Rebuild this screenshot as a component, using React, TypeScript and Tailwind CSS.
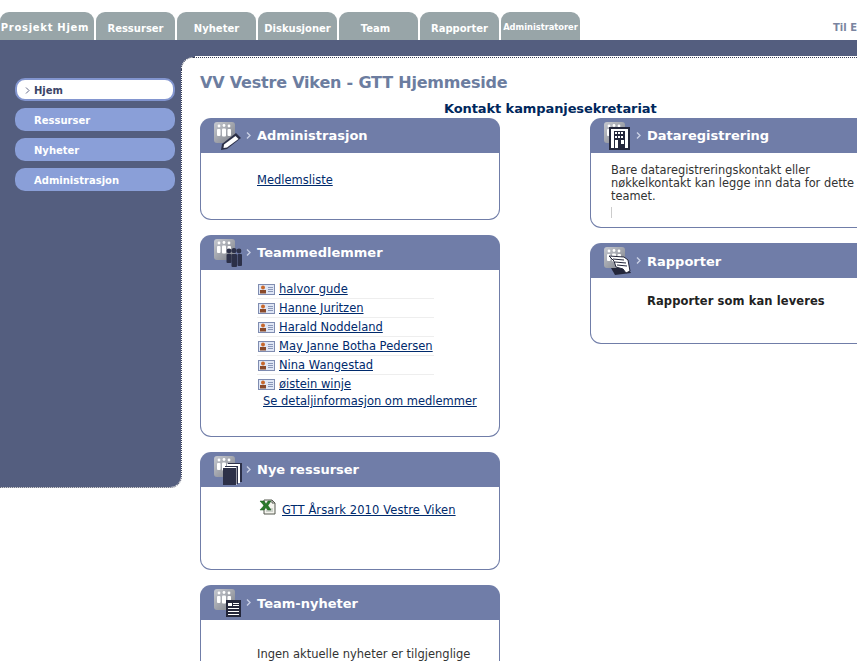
import React from "react";

const font = "font-['DejaVu_Sans','Liberation_Sans',sans-serif]";

function BaseIcon({ children }: { children?: React.ReactNode }) {
  return (
    <svg width="30" height="30" viewBox="0 0 30 30" className="shrink-0">
      <defs>
        <linearGradient id="tile" x1="0" y1="0" x2="1" y2="1">
          <stop offset="0" stopColor="#c6c9d0" />
          <stop offset="1" stopColor="#7d8088" />
        </linearGradient>
      </defs>
      <rect x="1" y="1" width="21" height="21" rx="3" fill="url(#tile)" />
      <g fill="#ffffff">
        <circle cx="6" cy="5" r="1.4" />
        <circle cx="11" cy="4.5" r="1.4" />
        <circle cx="16" cy="5" r="1.4" />
        <rect x="4" y="8" width="3.5" height="7" rx="1" />
        <rect x="9" y="7.5" width="4" height="8" rx="1" />
        <rect x="14.5" y="8" width="3.5" height="7" rx="1" />
      </g>
      {children}
    </svg>
  );
}

const Pencil = () => (
  <g>
    <path d="M23 12 L28 17 L14 28 L8 29 L9 23 Z" fill="#2c3048" />
    <path d="M22.5 15 L25.5 18 L14 26.5 L10.5 27 L11 23.5 Z" fill="#ffffff" />
  </g>
);

const People = () => (
  <g fill="#2c3048">
    <circle cx="16" cy="13" r="2.4" />
    <circle cx="21" cy="12.5" r="2.6" />
    <circle cx="26" cy="13" r="2.4" />
    <rect x="13.5" y="16" width="5" height="9" rx="1" />
    <rect x="18.5" y="16" width="5.5" height="13" rx="1" />
    <rect x="24.5" y="16" width="4.5" height="12" rx="1" />
  </g>
);

const Pages = () => (
  <g>
    <rect x="15" y="8" width="14" height="19" fill="#2c3048" />
    <rect x="14" y="9" width="13" height="19" fill="#ffffff" />
    <rect x="12" y="11" width="13" height="18" fill="#2c3048" />
    <rect x="11" y="12" width="12.5" height="18" fill="#ffffff" />
    <rect x="10" y="13" width="13" height="17" fill="#2c3048" />
  </g>
);

const News = () => (
  <g>
    <rect x="13" y="12" width="15" height="17" fill="#23263a" />
    <rect x="15" y="15" width="4" height="3" fill="#ffffff" />
    <g fill="#ffffff">
      <rect x="20" y="15" width="6" height="1" />
      <rect x="20" y="17" width="6" height="1" />
      <rect x="15" y="20" width="11" height="1" />
      <rect x="15" y="23" width="11" height="1" />
      <rect x="15" y="26" width="11" height="1" />
    </g>
  </g>
);

const Building = () => (
  <g>
    <rect x="6" y="6" width="21" height="23" fill="#23263a" />
    <rect x="8" y="8" width="17" height="19" fill="#ffffff" />
    <rect x="11" y="10" width="11" height="17" fill="#23263a" />
    <g fill="#ffffff">
      <rect x="12" y="11" width="2" height="2" />
      <rect x="15" y="11" width="2" height="2" />
      <rect x="18" y="11" width="2" height="2" />
      <rect x="12" y="15" width="2" height="2" />
      <rect x="15" y="15" width="2" height="2" />
      <rect x="18" y="15" width="2" height="2" />
      <rect x="12" y="19" width="3" height="8" />
      <rect x="18" y="19" width="3" height="4" />
    </g>
  </g>
);

const Report = () => (
  <g>
    <path d="M8 22 L25 22 L28 27 L12 29 Z" fill="#23263a" />
    <path d="M6 10 L21 11 L25 14 L27 25 L23 27 L20 23 L13 21 L11 15 Z" fill="#ffffff" stroke="#23263a" strokeWidth="1" />
    <g stroke="#23263a" strokeWidth="1">
      <line x1="10" y1="13" x2="21" y2="14" />
      <line x1="12" y1="16" x2="23" y2="17" />
      <line x1="14" y1="19" x2="24" y2="20" />
    </g>
  </g>
);

function PersonCard() {
  return (
    <svg width="17" height="11" viewBox="0 0 17 11" className="shrink-0">
      <rect x="0.5" y="0.5" width="16" height="10" fill="#dfe6f5" stroke="#7f8cb0" />
      <circle cx="5" cy="3.6" r="2" fill="#c8682c" />
      <rect x="2" y="6" width="6" height="3.5" fill="#8a4a2a" />
      <g fill="#8a97b8">
        <rect x="10" y="3" width="5" height="1" />
        <rect x="10" y="5" width="5" height="1" />
        <rect x="10" y="7" width="5" height="1" />
      </g>
    </svg>
  );
}

function ExcelIcon() {
  return (
    <svg width="17" height="17" viewBox="0 0 17 17" className="shrink-0">
      <path d="M5 1 H13 L16 4 V15 H5 Z" fill="#f4f4ee" stroke="#55584f" />
      <path d="M13 1 V4 H16" fill="none" stroke="#55584f" />
      <g stroke="#a8b0a8" strokeWidth="1">
        <line x1="7" y1="12" x2="14" y2="12" />
        <line x1="10" y1="10" x2="14" y2="10" />
      </g>
      <path d="M1 2 H5 L7 5 L9 2 H12 L9 6.5 L12 11 H8.5 L7 8.5 L5 11 H1 L5 6.5 Z" fill="#2a7a2c" stroke="#15551a" strokeWidth="0.5" />
    </svg>
  );
}

function Chevron({ color, width }: { color: string; width: number }) {
  return (
    <svg width="5" height="7" viewBox="0 0 5 7" className="shrink-0">
      <path d="M1 0.5 L4 3.5 L1 6.5" fill="none" stroke={color} strokeWidth={width} />
    </svg>
  );
}

function Panel({
  title,
  icon,
  bodyHeight,
  lowTitle,
  children,
}: {
  title: string;
  icon: React.ReactNode;
  bodyHeight: string;
  lowTitle?: boolean;
  children: React.ReactNode;
}) {
  return (
    <section className="w-[300px] shrink-0">
      <header className="flex h-[35px] items-center rounded-t-[11px] bg-[#707da8] pl-[13px]">
        <BaseIcon>{icon}</BaseIcon>
        <span className="mr-[6px] ml-[3px] flex">
          <Chevron color="#c9d0e4" width={1.4} />
        </span>
        <h2 className={`text-[13px] leading-[16px] font-bold text-white ${lowTitle ? "pt-[2px]" : ""}`}>{title}</h2>
      </header>
      <div className={`rounded-b-[11px] border border-t-0 border-[#707da8] bg-white ${bodyHeight}`}>{children}</div>
    </section>
  );
}

const tabs = [
  { label: "Prosjekt Hjem", cls: "w-[94px] text-[10px] tracking-[0.7px] pt-[2px] pr-[4px]" },
  { label: "Ressurser", cls: "w-[79px] text-[10px] pt-[4px]" },
  { label: "Nyheter", cls: "w-[79px] text-[10px] pt-[4px]" },
  { label: "Diskusjoner", cls: "w-[79px] text-[10px] pt-[4px]" },
  { label: "Team", cls: "w-[79px] text-[10px] pt-[4px] pr-[6px]" },
  { label: "Rapporter", cls: "w-[79px] text-[10px] pt-[4px]" },
  { label: "Administratorer", cls: "w-[79px] text-[8.3px] pt-[2px]" },
];

const members = [
  "halvor gude",
  "Hanne Juritzen",
  "Harald Noddeland",
  "May Janne Botha Pedersen",
  "Nina Wangestad",
  "øistein winje",
];

const linkClass = "text-[11.5px] leading-[13px] text-[#002a6c] underline";

export default function App() {
  return (
    <div className={`h-[661px] w-[857px] overflow-hidden bg-white leading-[13px] ${font}`}>
      <div className="flex h-[40px] items-end justify-between">
        <nav className="flex gap-[2px]">
          {tabs.map((t) => (
            <a
              key={t.label}
              className={`flex h-[28px] items-center justify-center rounded-t-[9px] bg-[#98a5a8] font-bold whitespace-nowrap text-white ${t.cls}`}
            >
              {t.label}
            </a>
          ))}
        </nav>
        <a className="h-[19px] w-[24px] text-[10px] leading-[14px] font-bold whitespace-nowrap text-[#7a84a0]">Til Ex</a>
      </div>
      <div className="h-[16px] bg-[#545e7f]" />
      <div className="flex">
        <aside className="h-[432px] w-[182px] shrink-0 rounded-br-[12px] border-r border-b border-dotted border-[#3b4159] bg-[#545e7f] bg-clip-padding pt-[22px]">
          <ul className="ml-[15px] flex w-[160px] flex-col gap-[7px] text-[10px] font-bold">
            <li className="flex h-[23px] items-center gap-[4px] rounded-[10px] border-2 border-[#8295cf] bg-white pt-[1px] pl-[8px] text-[#3c4568]">
              <Chevron color="#3c4568" width={0.8} />
              Hjem
            </li>
            <li className="flex h-[23px] items-center rounded-[10px] bg-[#8a9fd8] pt-[2px] pl-[19px] text-white">Ressurser</li>
            <li className="flex h-[23px] items-center rounded-[10px] bg-[#8a9fd8] pt-[2px] pl-[19px] text-white">Nyheter</li>
            <li className="flex h-[23px] items-center rounded-[10px] bg-[#8a9fd8] pt-[2px] pl-[19px] text-white">Administrasjon</li>
          </ul>
        </aside>
        <main className="relative mt-px min-w-0 flex-1 border-t border-dotted border-[#3b4159] pt-[15px] pl-[18px]">
          <div className="absolute -top-[2px] -left-px h-[14px] w-[14px] bg-[#545e7f]">
            <div className="mt-px h-[13px] w-[14px] rounded-tl-[12px] border-t border-l border-dotted border-[#3b4159] bg-white" />
          </div>
          <h1 className="text-[16px] leading-[20px] font-bold tracking-[-0.2px] whitespace-nowrap text-[#6c7da0]">
            VV Vestre Viken - GTT Hjemmeside
          </h1>
          <p className="mt-[8px] ml-[244px] text-[13px] leading-[16px] font-bold tracking-[-0.1px] whitespace-nowrap text-[#00275c]">
            Kontakt kampanjesekretariat
          </p>
          <div className="mt-[1px] flex gap-[90px]">
            <div className="flex w-[300px] shrink-0 flex-col gap-[15px]">
              <Panel title="Administrasjon" icon={<Pencil />} bodyHeight="h-[67px]">
                <div className="pt-[19px] pl-[56px]">
                  <a className={linkClass}>Medlemsliste</a>
                </div>
              </Panel>
              <Panel title="Teammedlemmer" icon={<People />} bodyHeight="h-[167px]">
                <ul className="ml-[56px] w-[177px] pt-[10px]">
                  {members.map((m, i) => (
                    <li
                      key={m}
                      className={`flex h-[19px] items-center gap-[4px] pl-[1px] ${i < members.length - 1 ? "border-b border-[#eeeeee]" : ""}`}
                    >
                      <PersonCard />
                      <a className={`${linkClass} whitespace-nowrap`}>{m}</a>
                    </li>
                  ))}
                </ul>
                <div className="-mt-px pl-[62px]">
                  <a className={`${linkClass} whitespace-nowrap`}>Se detaljinformasjon om medlemmer</a>
                </div>
              </Panel>
              <Panel title="Nye ressurser" icon={<Pages />} bodyHeight="h-[83px]">
                <div className="flex items-start gap-[6px] pt-[12px] pl-[58px]">
                  <ExcelIcon />
                  <a className={`${linkClass} mt-[5px] tracking-[0.1px]`}>GTT Årsark 2010 Vestre Viken</a>
                </div>
              </Panel>
              <Panel title="Team-nyheter" icon={<News />} bodyHeight="h-[80px]" lowTitle>
                <p className="pt-[28px] pl-[56px] text-[11.5px] leading-[13px] whitespace-nowrap text-[#333333]">
                  Ingen aktuelle nyheter er tilgjenglige
                </p>
              </Panel>
            </div>
            <div className="flex w-[300px] shrink-0 flex-col gap-[15px]">
              <Panel title="Dataregistrering" icon={<Building />} bodyHeight="h-[75px]">
                <div className="pt-[11px] pl-[20px] text-[11.4px] leading-[13px] text-[#333333]">
                  <p className="w-[262px]">Bare dataregistreringskontakt eller nøkkelkontakt kan legge inn data for dette teamet.</p>
                  <div className="mt-[4px] h-[11px] w-px bg-[#cccccc]" />
                </div>
              </Panel>
              <Panel title="Rapporter" icon={<Report />} bodyHeight="h-[66px]" lowTitle>
                <p className="pt-[17px] pl-[56px] text-[11.5px] leading-[13px] font-bold tracking-[0.1px] text-[#222222]">
                  Rapporter som kan leveres
                </p>
              </Panel>
            </div>
          </div>
        </main>
      </div>
    </div>
  );
}
